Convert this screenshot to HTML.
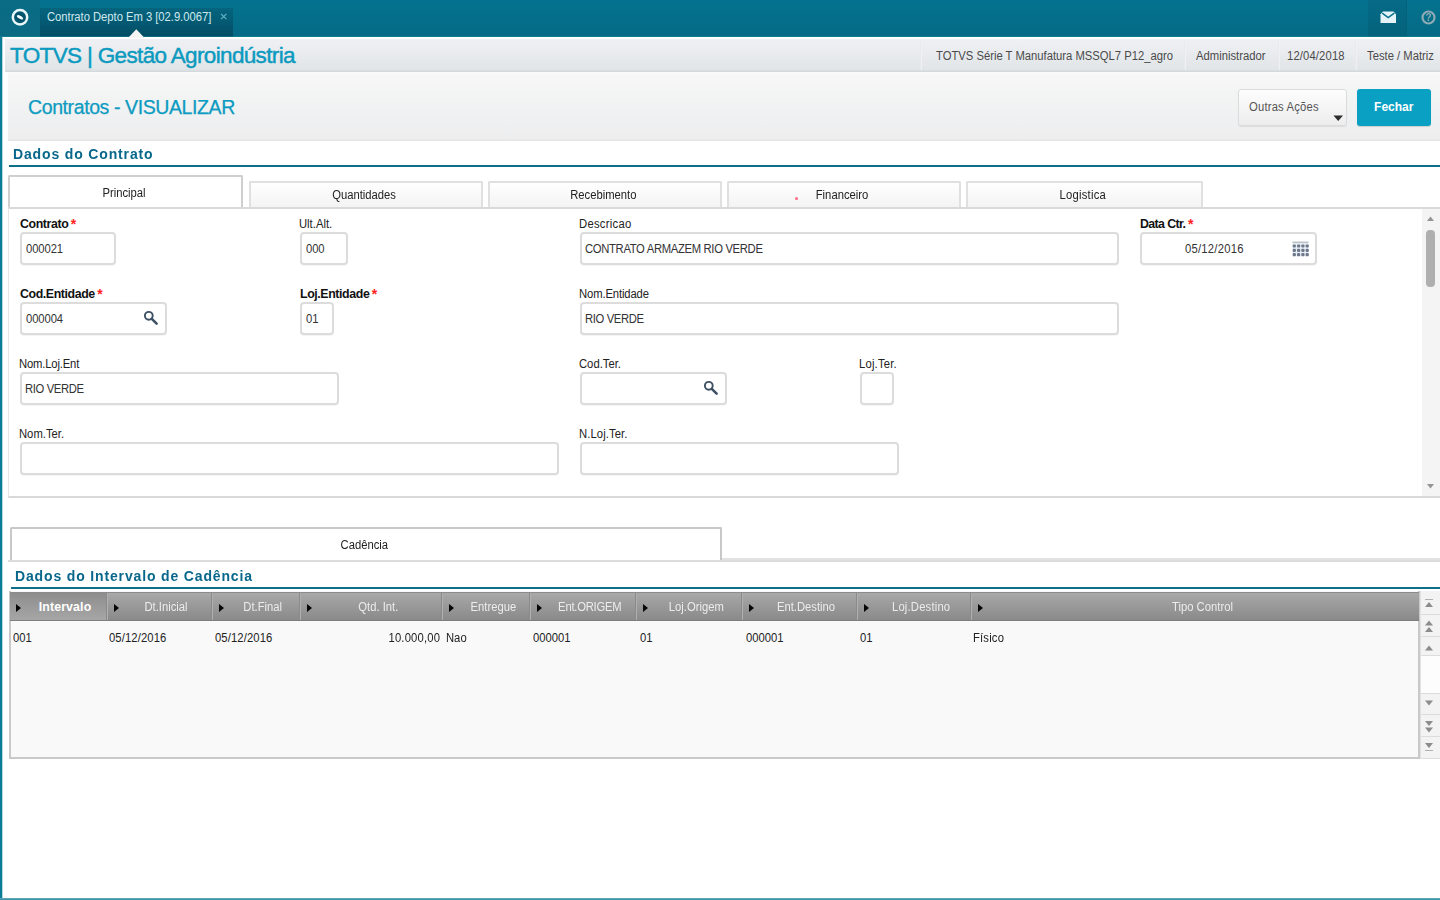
<!DOCTYPE html>
<html>
<head>
<meta charset="utf-8">
<title>Contratos - VISUALIZAR</title>
<style>
*{box-sizing:border-box;margin:0;padding:0}
html,body{width:1440px;height:900px;overflow:hidden;background:#fff}
body{font-family:"Liberation Sans",sans-serif;font-size:11.25px;color:#222;position:relative}
.abs{position:absolute}
#topbar{left:0;top:0;width:1440px;height:37px;background:linear-gradient(#04738f,#056a85)}
#logo{left:0;top:0;width:40px;height:37px;background:linear-gradient(#0a6c86,#0b6a82)}
#tab{left:40px;top:8px;width:193px;height:29px;background:linear-gradient(#05647e 0%,#045c75 40%,#034c64 100%);color:#cfe9ef;font-size:11.25px;line-height:19.5px;padding-left:7px;letter-spacing:-0.03px;white-space:nowrap}
#mailbg{left:1368px;top:0;width:39px;height:37px;background:linear-gradient(#056b87,#04627c);border-right:1px solid #04617a}
#leftb{left:0;top:37px;width:3px;height:863px;background:linear-gradient(90deg,#0a7c98 0,#0a7c98 2px,#b5d8e0 2px,#b5d8e0 3px)}
#botb{left:0;top:898px;width:1440px;height:2px;background:linear-gradient(#6fb0bf,#2a8aa0)}
#hdr1{left:3px;top:38px;width:1437px;height:34px;background:linear-gradient(#eff0f3 0%,#e8ebee 50%,#e1e5e8 92%,#d0d6da 100%);border-top:1px solid #fff;border-left:2px solid #fff}
#brand{left:10px;top:42px;font-size:22.5px;color:#0c9abf;letter-spacing:-0.65px;-webkit-text-stroke:0.45px #0c9abf;white-space:nowrap;line-height:28px}
.st{top:49px;font-size:11.25px;color:#4a4a4a;letter-spacing:0;white-space:nowrap;line-height:14px}
.sep{top:40px;width:2px;height:30px;background:linear-gradient(90deg,#e4e6e8,#f4f5f6);opacity:.8}
#hdr2{left:8px;top:72px;width:1432px;height:68.5px;background:linear-gradient(#fafafa 0%,#f6f7f6 4%,#f2f3f3 38%,#eff0f1 70%,#eeeeef 96%,#e4e4e5 100%)}
#title{left:28px;top:94px;font-size:19.5px;color:#0c9bc1;-webkit-text-stroke:0.25px #0c9bc1;letter-spacing:-0.4px;white-space:nowrap;line-height:26px}
#btn1{left:1238px;top:88.5px;width:109px;height:37.5px;border:1px solid #dcdcdc;border-radius:3px;background:linear-gradient(#fdfdfd,#ededed);color:#555;font-size:11.25px;line-height:35px;padding-left:10px;letter-spacing:0.2px;box-shadow:0 1px 1px rgba(0,0,0,.08)}
#btn2{left:1357px;top:88.5px;width:73.5px;height:37.5px;border-radius:3px;background:#0aa0c4;color:#fff;font-weight:bold;font-size:12px;line-height:36px;text-align:center;box-shadow:0 1px 1px rgba(0,0,0,.15)}
.sect{font-size:14px;font-weight:bold;color:#08678a;letter-spacing:0.85px;white-space:nowrap;line-height:18px}
.tline{height:2px;background:#0f6f89}
.tabx{padding-right:3px;border:2px solid #e0e0e0;border-bottom:none;background:linear-gradient(#fff,#f3f3f3);text-align:center;font-size:11.25px;color:#222;letter-spacing:0;border-radius:2px 2px 0 0}
.lbl{font-size:11.25px;color:#222;white-space:nowrap;line-height:14px;letter-spacing:0}
.lbl b{color:#111;letter-spacing:-0.4px;font-size:12.375px;position:relative;top:-1px}
.lbl i{color:#ff2222;font-style:normal;font-weight:bold;font-size:14px;position:relative;top:0px;left:2.5px}
.inp{height:33px;border:2px solid #dcdcdc;border-radius:4px;background:#fff;font-size:11.25px;line-height:30px;padding-left:4px;color:#333;letter-spacing:-0.1px;white-space:nowrap;box-shadow:0 1px 0 rgba(0,0,0,.04)}

.gh{top:593px;height:27px;color:#ececec;font-size:11.25px;line-height:29px;text-align:center;padding-left:13px;letter-spacing:0;border-left:1px solid #b0b0b0;box-shadow:-1px 0 0 #8a8a8a;white-space:nowrap}
.gh.sel{font-weight:bold;color:#fff;background:linear-gradient(#8e8e8e,#a6a6a6);border-left:none;box-shadow:none;font-size:12.375px;letter-spacing:0.12px}
.gh s{position:absolute;left:6px;top:11px;width:0;height:0;border-left:5px solid #050505;border-top:4.5px solid transparent;border-bottom:4.5px solid transparent}
.gc{top:630.5px;font-size:11.25px;line-height:14px;color:#222;white-space:nowrap}
.x,.xc,.xr{display:inline-block;transform:scaleX(.9375);font-size:12px}
.x{transform-origin:0 50%}.xc{transform-origin:50% 50%}.xr{transform-origin:100% 50%}
#wrap{position:absolute;left:0;top:0;width:1440px;height:900px;filter:blur(0.4px)}
</style>
</head>
<body>
<div id="topbar" class="abs"></div>
<div id="leftb" class="abs"></div>
<div id="botb" class="abs"></div>
<div id="wrap">

<div id="logo" class="abs"></div>
<div id="tab" class="abs"><span class="x">Contrato Depto Em 3 [02.9.0067]</span></div>
<div id="mailbg" class="abs"></div>
<div class="abs" style="left:0;top:36px;width:1440px;height:1px;background:rgba(30,150,160,.45)"></div>

<div id="hdr1" class="abs"></div>
<div id="brand" class="abs">TOTVS | Gestão Agroindústria</div>
<div id="hdr2" class="abs"></div>
<div id="title" class="abs">Contratos - VISUALIZAR</div>
<div id="btn1" class="abs"><span class="x">Outras Ações</span></div>
<div id="btn2" class="abs">Fechar</div>

<!-- status items -->
<div class="abs sep" style="left:920px"></div>
<div class="abs st" style="left:936px"><span class="x">TOTVS Série T Manufatura MSSQL7 P12_agro</span></div>
<div class="abs sep" style="left:1184px"></div>
<div class="abs st" style="left:1196px"><span class="x">Administrador</span></div>
<div class="abs sep" style="left:1278px"></div>
<div class="abs st" style="left:1287px;letter-spacing:0.15px"><span class="x">12/04/2018</span></div>
<div class="abs sep" style="left:1355px"></div>
<div class="abs st" style="left:1367px"><span class="x">Teste / Matriz</span></div>

<!-- section 1 -->
<div class="abs sect" style="left:13px;top:145px">Dados do Contrato</div>
<div class="abs tline" style="left:9px;top:165px;width:1431px"></div>

<!-- tabs -->
<div class="abs tabx" style="left:8px;top:175px;width:235px;height:33px;line-height:32px;background:#fff;border-color:#cfcfcf"><span class="xc">Principal</span></div>
<div class="abs tabx" style="left:249px;top:181px;width:234px;height:27px;line-height:25px"><span class="xc">Quantidades</span></div>
<div class="abs tabx" style="left:488px;top:181px;width:234px;height:27px;line-height:25px"><span class="xc">Recebimento</span></div>
<div class="abs tabx" style="left:727px;top:181px;width:234px;height:27px;line-height:25px"><span class="xc">Financeiro</span></div>
<div class="abs tabx" style="left:966px;top:181px;width:237px;height:27px;line-height:25px;letter-spacing:0.25px"><span class="xc">Logistica</span></div>

<!-- panel -->
<div class="abs" id="panel" style="left:8px;top:207px;width:1436px;height:291px;border:2px solid #d9d9d9;border-left:1px solid #e6e6e6;background:#fff"></div>
<div class="abs" id="sb1" style="left:1422px;top:209px;width:18px;height:287px;background:#f4f4f4"></div>
<div class="abs" style="left:1426px;top:230px;width:9px;height:57px;border-radius:4px;background:#afafaf"></div>

<!-- form row 1 -->
<div class="abs lbl" style="left:20px;top:217px"><b>Contrato</b><i>*</i></div>
<div class="abs inp" style="left:20px;top:232px;width:96px"><span class="x">000021</span></div>
<div class="abs lbl" style="left:299px;top:217px"><span class="x">Ult.Alt.</span></div>
<div class="abs inp" style="left:300px;top:232px;width:48px"><span class="x">000</span></div>
<div class="abs lbl" style="left:579px;top:217px;letter-spacing:0.3px"><span class="x">Descricao</span></div>
<div class="abs inp" style="left:580px;top:232px;width:539px;letter-spacing:-0.34px;padding-left:3px"><span class="x">CONTRATO ARMAZEM RIO VERDE</span></div>
<div class="abs lbl" style="left:1140px;top:217px"><b style="letter-spacing:-0.6px">Data Ctr.</b><i>*</i></div>
<div class="abs inp" style="left:1140px;top:232px;width:177px;padding-left:43px;letter-spacing:0.25px"><span class="x">05/12/2016</span></div>
<!-- row 2 -->
<div class="abs lbl" style="left:20px;top:287px"><b>Cod.Entidade</b><i>*</i></div>
<div class="abs inp" style="left:20px;top:302px;width:147px"><span class="x">000004</span></div>
<div class="abs lbl" style="left:300px;top:287px"><b>Loj.Entidade</b><i>*</i></div>
<div class="abs inp" style="left:300px;top:302px;width:34px"><span class="x">01</span></div>
<div class="abs lbl" style="left:579px;top:287px;letter-spacing:-0.13px"><span class="x">Nom.Entidade</span></div>
<div class="abs inp" style="left:580px;top:302px;width:539px;letter-spacing:-0.4px;padding-left:3px"><span class="x">RIO VERDE</span></div>
<!-- row 3 -->
<div class="abs lbl" style="left:19px;top:357px;letter-spacing:-0.17px"><span class="x">Nom.Loj.Ent</span></div>
<div class="abs inp" style="left:20px;top:372px;width:319px;letter-spacing:-0.4px;padding-left:3px"><span class="x">RIO VERDE</span></div>
<div class="abs lbl" style="left:579px;top:357px"><span class="x">Cod.Ter.</span></div>
<div class="abs inp" style="left:580px;top:372px;width:147px"></div>
<div class="abs lbl" style="left:859px;top:357px;letter-spacing:0.2px"><span class="x">Loj.Ter.</span></div>
<div class="abs inp" style="left:860px;top:372px;width:34px"></div>
<!-- row 4 -->
<div class="abs lbl" style="left:19px;top:427px"><span class="x">Nom.Ter.</span></div>
<div class="abs inp" style="left:20px;top:442px;width:539px"></div>
<div class="abs lbl" style="left:579px;top:427px;letter-spacing:0.1px"><span class="x">N.Loj.Ter.</span></div>
<div class="abs inp" style="left:580px;top:442px;width:319px"></div>

<!-- lower section -->
<div class="abs" style="left:722px;top:558px;width:718px;height:2px;background:#e2e2e2"></div>
<div class="abs" style="left:8px;top:560px;width:1432px;height:2px;background:#dcdcdc"></div>
<div class="abs tabx" style="left:10px;top:527px;width:712px;height:33px;line-height:33px;background:#fff;border-color:#c8c8c8"><span class="xc">Cadência</span></div>
<div class="abs sect" style="left:15px;top:567px">Dados do Intervalo de Cadência</div>
<div class="abs tline" style="left:11px;top:587px;width:1429px"></div>

<!-- grid -->
<div class="abs" id="grid" style="left:9px;top:591px;width:1411px;height:168px;border:2px solid #c9c9c9;border-top:none;background:#f9f9f9"></div>
<div class="abs" id="ghead" style="left:10px;top:592px;width:1409px;height:29px;background:linear-gradient(#a9a9a9 0%,#9a9a9a 45%,#8a8a8a 100%);border-top:1px solid #8c8c8c;border-bottom:1px solid #7e7e7e"></div>

<!-- grid header cells -->
<div class="abs gh sel" style="left:10px;width:97px"><s></s><span>Intervalo</span></div>
<div class="abs gh" style="left:107px;width:105px"><s></s><span class="xc">Dt.Inicial</span></div>
<div class="abs gh" style="left:212px;width:88px"><s></s><span class="xc">Dt.Final</span></div>
<div class="abs gh" style="left:300px;width:142px"><s></s><span class="xc">Qtd. Int.</span></div>
<div class="abs gh" style="left:442px;width:88px"><s></s><span class="xc">Entregue</span></div>
<div class="abs gh" style="left:530px;width:106px"><s></s><span class="xc" style="letter-spacing:-0.25px">Ent.ORIGEM</span></div>
<div class="abs gh" style="left:636px;width:106px"><s></s><span class="xc">Loj.Origem</span></div>
<div class="abs gh" style="left:742px;width:115px"><s></s><span class="xc">Ent.Destino</span></div>
<div class="abs gh" style="left:857px;width:114px"><s></s><span class="xc" style="letter-spacing:0.2px">Loj.Destino</span></div>
<div class="abs gh" style="left:971px;width:448px"><s></s><span class="xc">Tipo Control</span></div>
<div class="abs gc" style="left:13px"><span class="x">001</span></div>
<div class="abs gc" style="left:109px;letter-spacing:0.12px"><span class="x">05/12/2016</span></div>
<div class="abs gc" style="left:215px;letter-spacing:0.12px"><span class="x">05/12/2016</span></div>
<div class="abs gc" style="left:340px;width:100px;text-align:right;letter-spacing:0.2px"><span class="xr">10.000,00</span></div>
<div class="abs gc" style="left:446px"><span class="x">Nao</span></div>
<div class="abs gc" style="left:533px"><span class="x">000001</span></div>
<div class="abs gc" style="left:640px"><span class="x">01</span></div>
<div class="abs gc" style="left:746px"><span class="x">000001</span></div>
<div class="abs gc" style="left:860px"><span class="x">01</span></div>
<div class="abs gc" style="left:973px;letter-spacing:0.2px"><span class="x">Físico</span></div>
<svg class="abs" style="left:1420px;top:591px" width="20" height="170" viewBox="1420 591 20 170"><rect x="1420" y="591" width="20" height="168" fill="#f3f3f3"/><rect x="1421" y="655" width="19" height="38" fill="#fdfdfd"/><rect x="1420" y="614" width="20" height="1" fill="#dcdcdc"/><rect x="1420" y="636" width="20" height="1" fill="#dcdcdc"/><rect x="1420" y="655" width="20" height="1" fill="#dcdcdc"/><rect x="1420" y="693" width="20" height="1" fill="#dcdcdc"/><rect x="1420" y="714" width="20" height="1" fill="#dcdcdc"/><rect x="1420" y="736" width="20" height="1" fill="#dcdcdc"/><rect x="1420" y="758" width="20" height="1" fill="#dcdcdc"/><rect x="1420" y="591" width="1" height="168" fill="#e2e2e2"/><rect x="1425" y="599" width="8" height="1" fill="#b0b0b0"/><path d="M1425.0 607.0 L1429 602.0 L1433.0 607.0Z" fill="#8c8c8c"/><path d="M1425.0 625.5 L1429 620.5 L1433.0 625.5Z" fill="#8c8c8c"/><path d="M1425.0 632.0 L1429 627.0 L1433.0 632.0Z" fill="#8c8c8c"/><path d="M1425.0 650.5 L1429 645.5 L1433.0 650.5Z" fill="#8c8c8c"/><path d="M1425.0 700.5 L1429 705.5 L1433.0 700.5Z" fill="#8c8c8c"/><path d="M1425.0 721.0 L1429 726.0 L1433.0 721.0Z" fill="#8c8c8c"/><path d="M1425.0 727.5 L1429 732.5 L1433.0 727.5Z" fill="#8c8c8c"/><path d="M1425.0 743.0 L1429 748.0 L1433.0 743.0Z" fill="#8c8c8c"/><rect x="1425" y="750" width="8" height="1" fill="#b0b0b0"/></svg>
<svg class="abs" style="left:1422px;top:209px" width="18" height="288" viewBox="0 0 18 288"><path d="M5 12 L8.5 7.5 L12 12Z" fill="#959595"/><path d="M5 275 L8.5 279.5 L12 275Z" fill="#959595"/></svg>
<svg class="abs" style="left:142px;top:309px" width="18" height="18" viewBox="0 0 18 18"><circle cx="6.8" cy="6.8" r="3.9" fill="none" stroke="#3d5064" stroke-width="1.9"/><path d="M9.8 9.8 L14.6 14.6" stroke="#3d5064" stroke-width="2.6" stroke-linecap="round"/></svg>
<svg class="abs" style="left:702px;top:379px" width="18" height="18" viewBox="0 0 18 18"><circle cx="6.8" cy="6.8" r="3.9" fill="none" stroke="#3d5064" stroke-width="1.9"/><path d="M9.8 9.8 L14.6 14.6" stroke="#3d5064" stroke-width="2.6" stroke-linecap="round"/></svg>
<svg class="abs" style="left:1292px;top:241px" width="18" height="16" viewBox="0 0 18 16"><rect x="0.5" y="0.5" width="16" height="2" fill="#b9c3c8"/><rect x="0.5" y="2.5" width="16" height="13" fill="#e9eff8"/><rect x="0.7" y="3.4" width="3.2" height="3.2" rx="1" fill="#6d788a"/><rect x="5.0" y="3.4" width="3.2" height="3.2" rx="1" fill="#6d788a"/><rect x="9.299999999999999" y="3.4" width="3.2" height="3.2" rx="1" fill="#6d788a"/><rect x="13.599999999999998" y="3.4" width="3.2" height="3.2" rx="1" fill="#6d788a"/><rect x="0.7" y="7.699999999999999" width="3.2" height="3.2" rx="1" fill="#6d788a"/><rect x="5.0" y="7.699999999999999" width="3.2" height="3.2" rx="1" fill="#6d788a"/><rect x="9.299999999999999" y="7.699999999999999" width="3.2" height="3.2" rx="1" fill="#6d788a"/><rect x="13.599999999999998" y="7.699999999999999" width="3.2" height="3.2" rx="1" fill="#6d788a"/><rect x="0.7" y="12.0" width="3.2" height="3.2" rx="1" fill="#6d788a"/><rect x="5.0" y="12.0" width="3.2" height="3.2" rx="1" fill="#6d788a"/><rect x="9.299999999999999" y="12.0" width="3.2" height="3.2" rx="1" fill="#6d788a"/><rect x="13.599999999999998" y="12.0" width="3.2" height="3.2" rx="1" fill="#6d788a"/></svg>
<svg class="abs" style="left:1333px;top:115px" width="11" height="7" viewBox="0 0 11 7"><path d="M0.5 0.5 L10 0.5 L5.2 6Z" fill="#2d2d2d"/></svg>
<div class="abs" style="left:794.5px;top:196.5px;width:3px;height:3px;background:#ff6a84;border-radius:1.5px"></div>
<svg class="abs" style="left:10px;top:7px" width="21" height="21" viewBox="0 0 21 21"><circle cx="10" cy="10.3" r="7.2" fill="#05566f" stroke="#eaf8fa" stroke-width="2.5"/><ellipse cx="10" cy="10.3" rx="5" ry="3.3" transform="rotate(30 10 10.3)" fill="#04506a"/><ellipse cx="10" cy="10.3" rx="3.5" ry="1.5" transform="rotate(30 10 10.3)" fill="#f6fdfd"/></svg>
<svg class="abs" style="left:128px;top:29px" width="17" height="9" viewBox="0 0 17 9"><path d="M0 9 L8.3 0.3 L16.6 9Z" fill="#f4f4f4"/></svg>
<svg class="abs" style="left:220px;top:13px" width="8" height="8" viewBox="0 0 8 8"><path d="M1 0.8 L6.4 6.2 M6.4 0.8 L1 6.2" stroke="#63b3c4" stroke-width="1.2"/></svg>
<svg class="abs" style="left:1380px;top:11px" width="17" height="13" viewBox="0 0 17 13"><path d="M0.5 3.2 L3 0.6 L13.5 0.6 L16 3.2 L16 12 L0.5 12Z" fill="#e6f4fa"/><path d="M2.2 2.2 L8.2 6.6 L14.3 2.2" fill="none" stroke="#0a7290" stroke-width="1.6"/></svg>
<svg class="abs" style="left:1420px;top:9px" width="17" height="17" viewBox="0 0 17 17"><circle cx="8.5" cy="8.5" r="6" fill="none" stroke="#8eaab5" stroke-width="2.2"/><text x="8.5" y="12.3" font-family="Liberation Sans" font-weight="bold" font-size="10" fill="#8eaab5" text-anchor="middle">?</text></svg>

</div>
</body>
</html>
